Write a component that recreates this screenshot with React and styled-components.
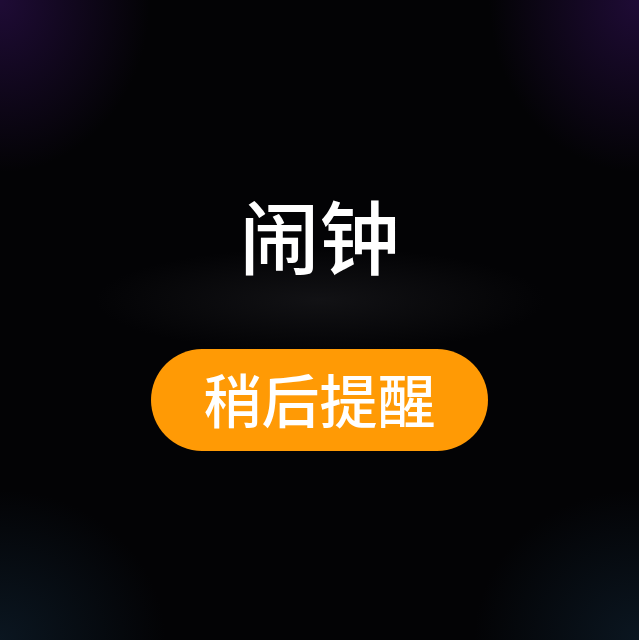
import React from "react";
import styled, { createGlobalStyle } from "styled-components";

const GlobalStyle = createGlobalStyle`
  html, body {
    margin: 0;
    padding: 0;
    background: #030305;
  }
  * {
    box-sizing: border-box;
  }
`;

const Screen = styled.div`
  width: 639px;
  height: 640px;
  display: flex;
  flex-direction: column;
  align-items: center;
  padding-top: 193px;
  font-family: "Noto Sans CJK SC", "Noto Sans", sans-serif;
  background:
    radial-gradient(ellipse 300px 70px at 320px 300px, rgba(40, 40, 44, 0.4), transparent 75%),
    radial-gradient(ellipse 200px 230px at 0px 0px, rgba(40, 14, 70, 0.75), transparent 75%),
    radial-gradient(ellipse 200px 230px at 639px 0px, rgba(40, 14, 70, 0.75), transparent 75%),
    radial-gradient(ellipse 220px 200px at 0px 640px, rgba(14, 30, 44, 0.7), transparent 75%),
    radial-gradient(ellipse 220px 200px at 639px 640px, rgba(14, 30, 44, 0.7), transparent 75%),
    #030305;
`;

const Title = styled.h1`
  margin: 0;
  font-size: 80px;
  line-height: 80px;
  font-weight: 500;
  color: #ffffff;
`;

const SnoozeButton = styled.button`
  margin-top: 76px;
  width: 337px;
  height: 102px;
  border: none;
  border-radius: 51px;
  background: #ff9a05;
  color: #ffffff;
  font-family: inherit;
  font-size: 58px;
  font-weight: 500;
  line-height: 1;
  display: flex;
  align-items: center;
  justify-content: center;
  padding: 0 0 4px;
  cursor: pointer;
`;

export default function App() {
  return (
    <>
      <GlobalStyle />
      <Screen>
        <Title>闹钟</Title>
        <SnoozeButton>稍后提醒</SnoozeButton>
      </Screen>
    </>
  );
}
